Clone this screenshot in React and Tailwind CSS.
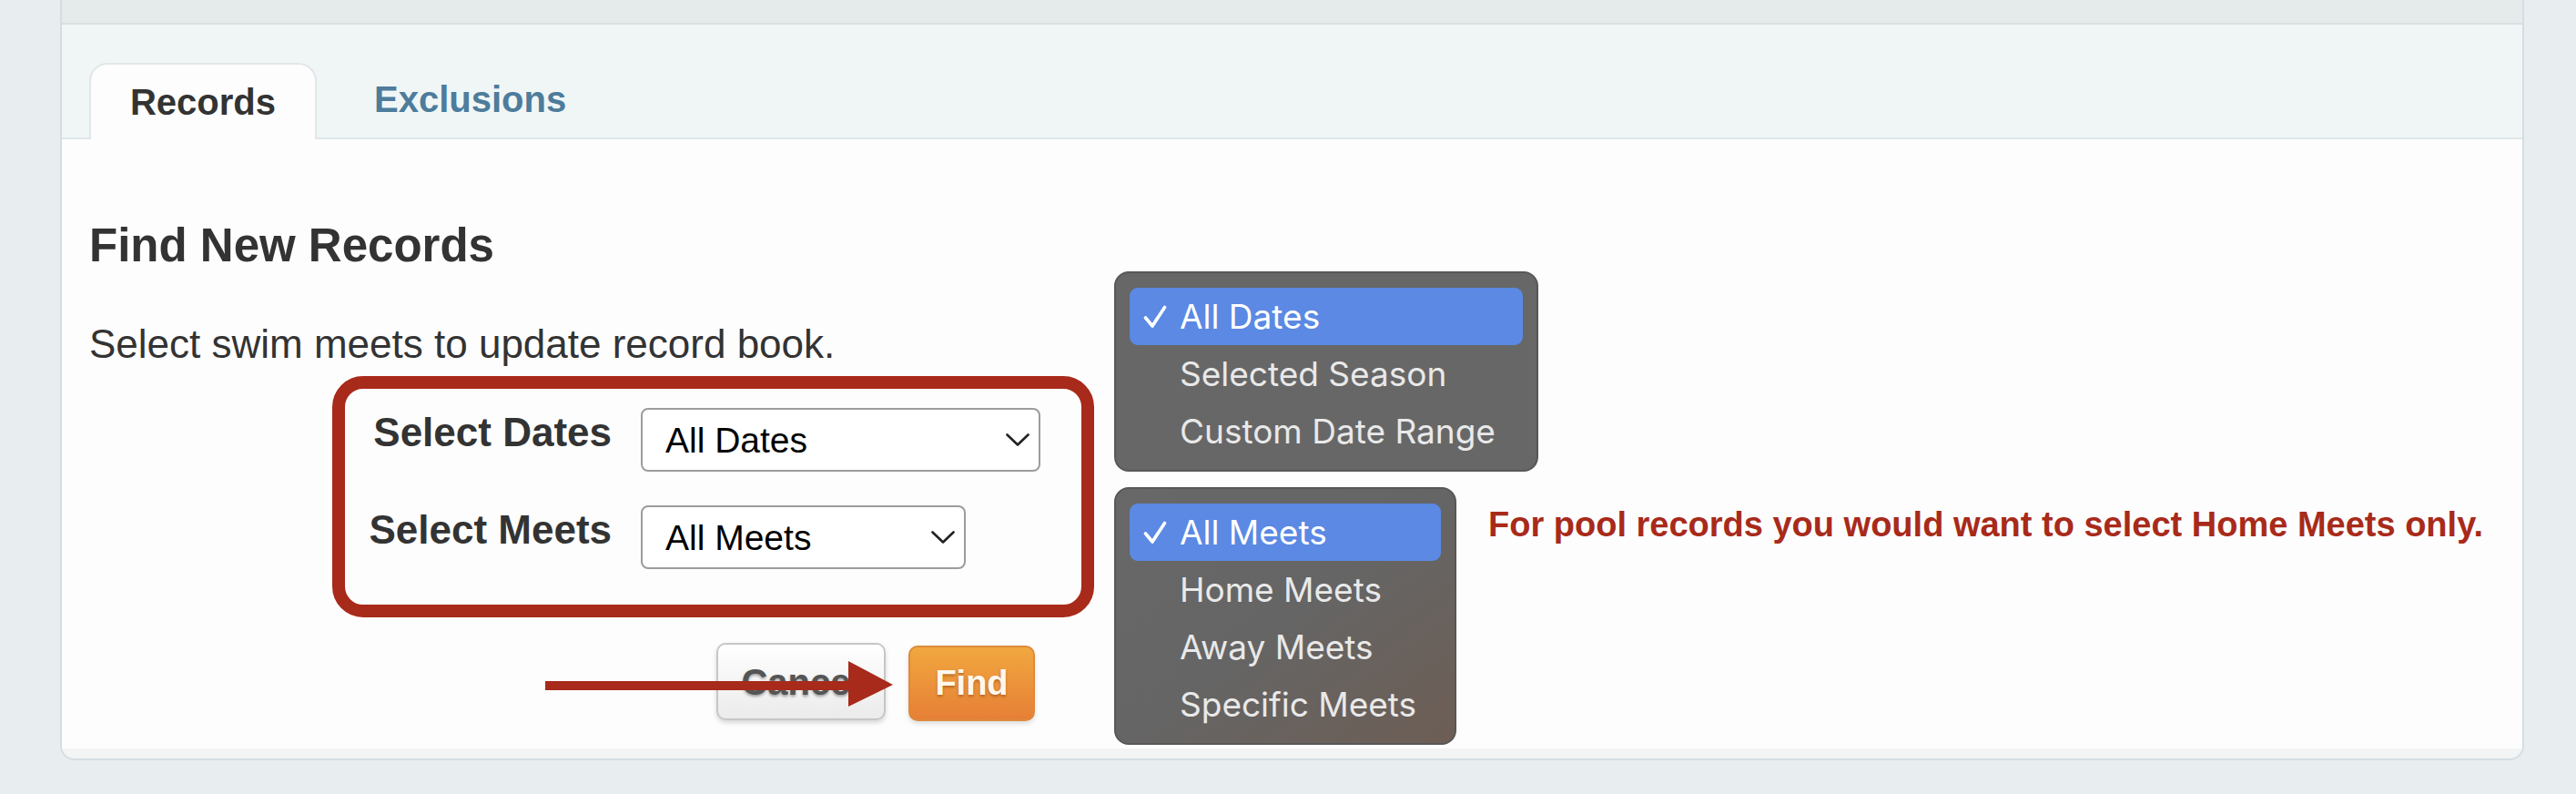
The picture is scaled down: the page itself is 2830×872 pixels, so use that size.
import { Fragment } from "react";

const Chevron = ({ className = "" }) => (
  <svg viewBox="0 0 26 14" className={className} fill="none">
    <path d="M1.5 1.5 L13 12.5 L24.5 1.5" stroke="#222" strokeWidth="2.6" strokeLinecap="round" strokeLinejoin="round" />
  </svg>
);

const Check = () => (
  <svg viewBox="0 0 26 26" className="w-[26px] h-[26px]" fill="none">
    <path d="M2.5 14 L10 23 L23.5 2.5" stroke="#ffffff" strokeWidth="3.6" strokeLinecap="round" strokeLinejoin="round" />
  </svg>
);

const FakeSelect = ({ value, width }) => (
  <div className={`${width} h-[70px] flex items-center justify-between pl-[25px] pr-[10px] bg-white border-2 border-[#9c9c9c] rounded-[8px] text-[39px] text-black leading-none`}>
    <span>{value}</span>
    <Chevron className="w-[26px] h-[14px]" />
  </div>
);

const Menu = ({ items, className }) => (
  <div className={`absolute rounded-[16px] border-2 border-[#585858] px-[15px] pt-[16px] font-['Inter',sans-serif] text-[37px] text-[#e9e9e9] ${className}`}>
    {items.map((item, i) => (
      <div
        key={item}
        className={`h-[63px] flex items-center pl-[15px] rounded-[9px] ${i === 0 ? "bg-[#5b89e3] text-white" : ""}`}
      >
        <span className="w-[40px] flex items-center">{i === 0 && <Check />}</span>
        <span>{item}</span>
      </div>
    ))}
  </div>
);

export default function App() {
  return (
    <div className="relative w-[2830px] h-[872px] overflow-hidden bg-[#e8eef0] font-['Liberation_Sans',Arial,sans-serif]">
      <div className="ml-[66px] w-[2707px] border-x-2 border-b-2 border-[#d4dee2] rounded-b-[16px] overflow-hidden">
        <div className="h-[27px] bg-[#e5eaeb] border-b-2 border-[#d9e0e2]" />
        <div className="h-[126px] bg-[#f0f6f6] border-b-2 border-[#dfe6e8] flex items-end pl-[30px]">
          <div className="w-[250px] h-[84px] -mb-[2px] bg-[#fdfdfd] border-2 border-b-0 border-[#e1e7e9] rounded-t-[20px] flex items-center justify-center text-[40px] font-bold text-[#333]">
            Records
          </div>
          <div className="h-[84px] ml-[63px] flex items-center text-[40px] font-bold text-[#4d7c9c]">
            Exclusions
          </div>
        </div>

        <div className="bg-[#fdfdfd] pl-[30px] pb-[30px]">
          <h3 className="pt-[87px] text-[51px] leading-[60px] font-bold text-[#333]">Find New Records</h3>
          <p className="mt-[52px] text-[44px] leading-[52px] text-[#333]">
            Select swim meets to update record book.
          </p>

          <div className="ml-[267px] mt-[9px] w-[837px] h-[265px] border-[14px] border-[#a82a1a] rounded-[34px] pt-[21px] pl-[24px]">
            <div className="grid grid-cols-[269px_auto] gap-x-[32px] gap-y-[37px] items-start">
              {[
                ["Select Dates", "All Dates", "w-[439px]"],
                ["Select Meets", "All Meets", "w-[357px]"],
              ].map(([label, value, w]) => (
                <Fragment key={label}>
                  <div className="justify-self-end text-[44px] leading-[54px] font-bold text-[#333]">{label}</div>
                  <FakeSelect value={value} width={w} />
                </Fragment>
              ))}
            </div>
          </div>

          <div className="mt-[28px] ml-[689px] flex items-start gap-[25px]">
            <button className="w-[186px] h-[85px] rounded-[10px] border-2 border-[#c6c6c6] bg-gradient-to-b from-white to-[#ebebeb] shadow-[0_3px_5px_rgba(0,0,0,0.15)] text-[40px] font-bold text-[#555] [text-shadow:0_2px_3px_rgba(0,0,0,0.35)]">
              Cancel
            </button>
            <button className="mt-[3px] w-[139px] h-[83px] rounded-[10px] border-2 border-[#dc8a3c] bg-gradient-to-b from-[#f1a73f] to-[#e67f36] shadow-[0_3px_5px_rgba(0,0,0,0.12)] text-[38px] font-bold text-[#fff7ec] [text-shadow:0_2px_3px_rgba(120,50,0,0.45)]">
              Find
            </button>
          </div>
        </div>
        <div className="h-[11px] bg-[#f3f4f4]" />
      </div>

      <svg className="absolute left-[599px] top-[726px] w-[382px] h-[50px]" viewBox="0 0 382 50">
        <rect x="0" y="22" width="336" height="10" fill="#a82a1a" />
        <polygon points="333,0 382,26 333,50" fill="#a82a1a" />
      </svg>

      <Menu
        items={["All Dates", "Selected Season", "Custom Date Range"]}
        className="left-[1224px] top-[298px] w-[466px] h-[220px] bg-[#676767]"
      />
      <Menu
        items={["All Meets", "Home Meets", "Away Meets", "Specific Meets"]}
        className="left-[1224px] top-[535px] w-[376px] h-[283px] bg-gradient-to-br from-[#686868] via-[#656565] to-[#6d5e55]"
      />

      <div className="absolute left-[1635px] top-[554px] text-[38px] leading-[44px] font-bold text-[#a82a1a] whitespace-nowrap">
        For pool records you would want to select Home Meets only.
      </div>
    </div>
  );
}
